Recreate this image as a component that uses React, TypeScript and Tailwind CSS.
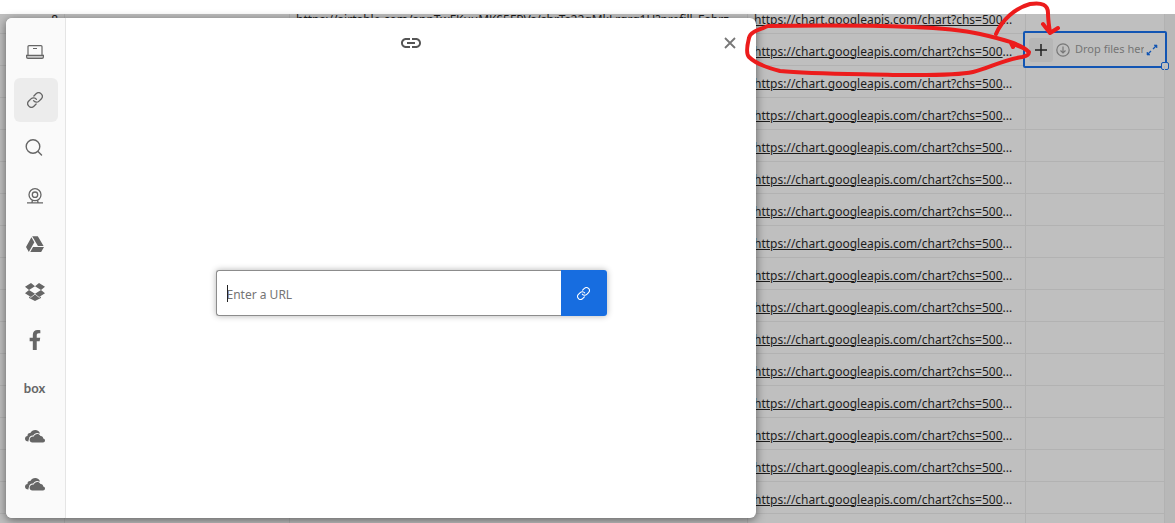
import React from "react";
import { FaFacebookF, FaGoogleDrive } from "react-icons/fa";
import { MdLink } from "react-icons/md";

function LaptopIcon() {
  return (
    <svg width="18" height="14" viewBox="0 0 18 14" fill="none" stroke="currentColor" strokeWidth="1.2">
      <path d="M2 10.2V1.6Q2 .6 3 .6H15Q16 .6 16 1.6V10.2" />
      <path d="M.6 10.4H17.4V12Q17.4 13.4 16 13.4H2Q.6 13.4 .6 12Z" fill="#c8c8c8" />
      <path d="M7 3.5H11" />
    </svg>
  );
}

function ChainIcon({ size }: { size: number }) {
  return (
    <svg width={size} height={size} viewBox="1 1 22 22" fill="none" stroke="currentColor" strokeWidth="1.8" strokeLinecap="round">
      <path d="M10 13a5 5 0 0 0 7.54.54l3-3a5 5 0 0 0-7.07-7.07l-3 3" />
      <path d="M14 11a5 5 0 0 0-7.54-.54l-3 3a5 5 0 0 0 7.07 7.07l3-3" />
    </svg>
  );
}

function SearchIcon() {
  return (
    <svg width="20" height="18" viewBox="0 0 20 18" fill="none" stroke="currentColor" strokeWidth="1.4" strokeLinecap="round">
      <circle cx="8" cy="7.5" r="6.8" />
      <path d="M13 12.5L16.5 16" />
    </svg>
  );
}

function WebcamIcon() {
  return (
    <svg width="16" height="16" viewBox="0 0 16 16" fill="none" stroke="currentColor" strokeWidth="1.3">
      <circle cx="8" cy="6.7" r="6" />
      <circle cx="8" cy="6.7" r="2.7" />
      <path d="M5.5 12L5 14.5M10.5 12L11 14.5M0 14.8H16" />
    </svg>
  );
}

function DropboxIcon() {
  return (
    <svg width="20" height="18" viewBox="0 0 20 18" fill="currentColor">
      <path d="M6 0L10 3.3L4 7L0 3.8ZM14 0L20 3.8L16 7L10 3.3ZM0 10.2L4 7L10 10.7L5.9 14ZM20 10.2L16 7L10 10.7L14.1 14Z" />
      <path d="M10 11.4L14.1 14.8L15.9 13.6V15L10 18L4.1 15V13.6L5.9 14.8Z" />
    </svg>
  );
}

function CloudsIcon() {
  return (
    <svg width="20" height="13" viewBox="0 0 20 13" fill="currentColor">
      <path d="M3.5 11.6C1.2 11.4 0 10.3 0 8.7C0 7.2 1 6.2 2.5 6C2.3 4 3.6 2.8 5.3 3C6.4 1 8.2 0 10.2 0C12.6 0 14.4 1.4 15 3.5L14 3.4C12.6 2.4 9.2 2.7 8.3 5.6C5.8 5.4 4 6.8 4 9C3.5 9.8 3.3 10.7 3.5 11.6Z" />
      <path d="M7.4 12.4C5.7 12.4 4.6 11.3 4.6 9.7C4.6 7.8 6.4 6.2 8.8 6.6C9.5 3.7 14 2.8 15.5 6.1C17.2 6 18.2 7 18.2 8.5C19.4 8.8 20 9.5 20 10.5C20 11.7 19.2 12.4 18 12.4Z" />
    </svg>
  );
}

const sources: { name: string; icon: React.ReactNode }[] = [
  { name: "My device", icon: <LaptopIcon /> },
  { name: "Link", icon: <ChainIcon size={16} /> },
  { name: "Web search", icon: <SearchIcon /> },
  { name: "Camera", icon: <WebcamIcon /> },
  { name: "Google Drive", icon: <FaGoogleDrive size={18} /> },
  { name: "Dropbox", icon: <DropboxIcon /> },
  { name: "Facebook", icon: <FaFacebookF size={20} /> },
  { name: "Box", icon: <span className="font-['Lato',sans-serif] text-[13px] leading-4 font-bold">box</span> },
  { name: "OneDrive", icon: <CloudsIcon /> },
  { name: "OneDrive for Business", icon: <CloudsIcon /> },
];

function SourcePicker() {
  return (
    <section
      role="dialog"
      aria-label="Attach files"
      className="absolute top-[18px] bottom-[5px] left-[6px] flex w-[750px] overflow-hidden rounded-md bg-white shadow-[0_2px_10px_rgba(0,0,0,0.5)]"
    >
      <nav className="flex w-[60px] shrink-0 flex-col items-center gap-1 border-r border-[#e5e5e5] bg-[#fafafa] py-3 text-[#666]">
        {sources.map((s, i) => (
          <button
            key={s.name}
            type="button"
            aria-label={s.name}
            className={
              i === 1
                ? "flex size-11 shrink-0 items-center justify-center rounded-md bg-[#ececec] pr-0.5"
                : "flex size-11 shrink-0 items-center justify-center rounded-md pr-0.5"
            }
          >
            {s.icon}
          </button>
        ))}
      </nav>
      <div className="flex flex-1 flex-col">
        <header className="grid h-[50px] shrink-0 grid-cols-[1fr_auto_1fr] items-center px-5 text-[#555]">
          <span />
          <MdLink size={24} />
          <button type="button" aria-label="Close" className="justify-self-end text-[#777]">
            <svg width="12" height="12" viewBox="0 0 12 12" fill="none" stroke="currentColor" strokeWidth="1.8">
              <path d="M1 1L11 11M11 1L1 11" />
            </svg>
          </button>
        </header>
        <form className="flex flex-1 items-center justify-center" onSubmit={(e) => e.preventDefault()}>
          <div className="relative flex h-[46px] w-[391px] rounded-[3px] shadow-[0_0_6px_rgba(0,0,0,0.3)]">
            <input
              type="text"
              aria-label="URL"
              placeholder="Enter a URL"
              className="min-w-0 flex-1 rounded-l-[3px] border border-r-0 border-[#8c8c8c] bg-white px-2.5 pt-1 text-xs text-[#333] outline-none placeholder:text-[#757575]"
            />
            <span className="absolute top-[15px] left-[11px] h-[17px] w-px bg-[#222]" />
            <button
              type="submit"
              aria-label="Fetch URL"
              className="flex w-[46px] items-center justify-center rounded-r-[3px] bg-[#176de0] text-white"
            >
              <ChainIcon size={13} />
            </button>
          </div>
        </form>
      </div>
    </section>
  );
}

function ActiveCell() {
  return (
    <div className="absolute -inset-[3px] flex items-center rounded-[2px] border-2 border-[#1255b3] bg-[#bfbfbf] pl-1">
      <button type="button" aria-label="Add attachment" className="flex size-6 shrink-0 items-center justify-center rounded-[3px] bg-[#b6b6b6] text-[#222]">
        <svg width="12" height="12" viewBox="0 0 12 12" stroke="currentColor" strokeWidth="1.5">
          <path d="M6 0V12M0 6H12" />
        </svg>
      </button>
      <svg width="14" height="14" viewBox="0 0 14 14" fill="none" stroke="#777" strokeWidth="1.2" className="ml-[3px] shrink-0">
        <circle cx="7" cy="7" r="6.2" />
        <path d="M7 3.5V10M4.5 7.5L7 10L9.5 7.5" />
      </svg>
      <span className="ml-[5px] w-[69px] shrink-0 overflow-hidden text-[11px] whitespace-nowrap text-[#757575]">Drop files here</span>
      <svg width="12" height="12" viewBox="0 0 12 12" fill="#1255b3" stroke="#1255b3" strokeWidth="1.3" className="ml-[2px] shrink-0">
        <path d="M7 5L10 2M5 7L2 10" />
        <path d="M8 1H11V4ZM1 8V11H4Z" strokeWidth=".6" />
      </svg>
      <span className="absolute -right-[4px] -bottom-[4px] size-2 rounded-[2px] border border-[#1255b3] bg-[#bfbfbf]" />
    </div>
  );
}

function Sheet() {
  const line = "border-r border-b border-[#b2b2b2]";
  return (
    <table className="-mt-3 w-full table-fixed border-separate border-spacing-0 bg-[#bfbfbf] text-xs text-[#1c1c1c]">
      <colgroup>
        <col className="w-[65px]" />
        <col className="w-[225px]" />
        <col className="w-[458px]" />
        <col className="w-[278px]" />
        <col className="w-[139px]" />
        <col />
      </colgroup>
      <tbody>
        {Array.from({ length: 17 }, (_, row) => (
          <tr key={row} className="h-8">
            <td className={`${line} pt-1 pr-[6px] text-right`}>{row === 0 ? "8" : ""}</td>
            <td className={line} />
            <td className={`${line} overflow-hidden px-[6px] pt-1 whitespace-nowrap`}>
              {row === 0 ? "https://airtable.com/appTwFKuuMKS5FPVs/shrTs22qMkLrgrq1U?prefill_Fabrz" : ""}
            </td>
            <td className={`${line} px-[6px] pt-1 whitespace-nowrap`}>
              {row < 16 && (
                <>
                  <a href="https://chart.googleapis.com/chart?chs=500" className="underline">
                    https://chart.googleapis.com/chart?chs=500
                  </a>
                  ...
                </>
              )}
            </td>
            <td className={`${line} relative`}>{row === 1 && <ActiveCell />}</td>
            <td className="bg-[#b8b8b8]" />
          </tr>
        ))}
      </tbody>
    </table>
  );
}

function Annotation() {
  return (
    <svg
      className="pointer-events-none absolute top-0 left-[740px]"
      width="330"
      height="90"
      viewBox="0 0 330 90"
      fill="none"
      stroke="#ec1c1c"
      strokeWidth="4"
      strokeLinecap="round"
      strokeLinejoin="round"
    >
      <path d="M289 52C282 44 262 39 240 34C222 30 200 28 173 27C145 26 90 25 28 26C18 30 10 32 9 38C7 46 6 54 9 57C16 64 28 68 40 71C70 74 115 74 153 75C185 75 215 76 233 72C250 68 262 60 282 57C292 55 291 51 278 46L271 43L273 47" />
      <path d="M256 34C262 20 275 8 290 4C302 2 308 5 308 13C308 20 309 25 310 33M303 24L310 33L318 28" />
    </svg>
  );
}

export default function App() {
  return (
    <div className="relative flex h-screen flex-col overflow-hidden bg-white pt-[14px] font-['Noto_Sans','Open_Sans',sans-serif]">
      <main className="min-h-0 flex-1 overflow-hidden">
        <Sheet />
      </main>
      <SourcePicker />
      <Annotation />
    </div>
  );
}
